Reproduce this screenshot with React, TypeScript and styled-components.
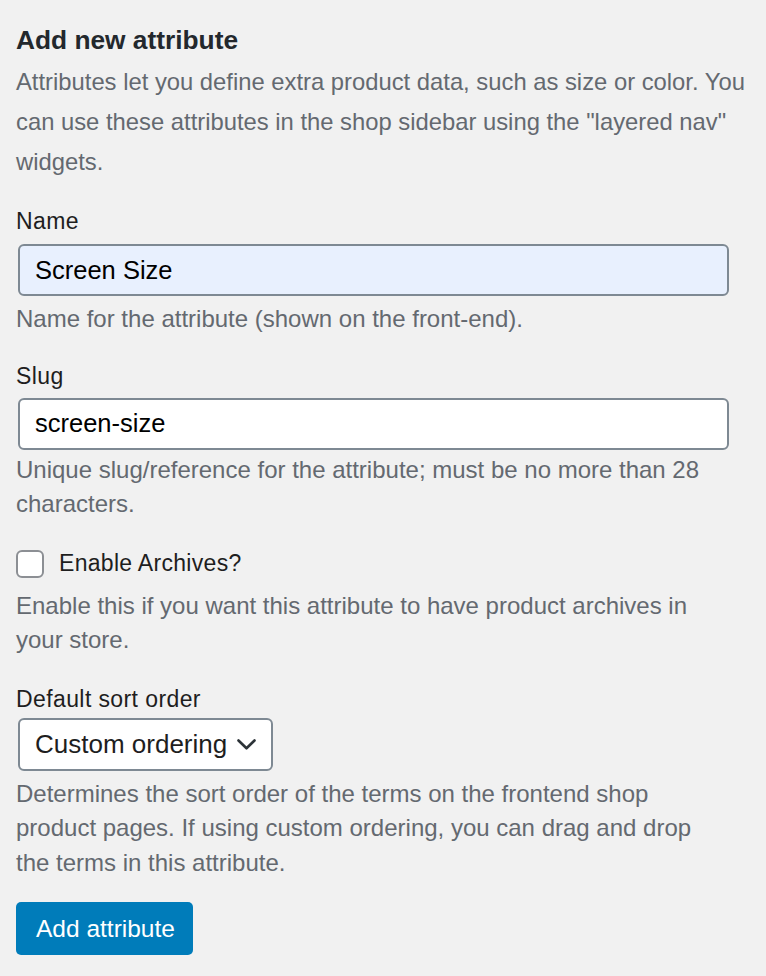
import React from 'react';
import styled, { createGlobalStyle } from 'styled-components';

const GlobalStyle = createGlobalStyle`
  html, body {
    margin: 0;
    padding: 0;
    background: #f1f1f1;
  }
  body {
    font-family: "Liberation Sans", Arial, sans-serif;
    color: #23282d;
  }
`;

const Form = styled.form`
  width: 766px;
  box-sizing: border-box;
  padding: 25px 35px 20px 16px;
  display: flex;
  flex-direction: column;
`;

const Title = styled.h2`
  margin: 0;
  font-size: 26.3px;
  line-height: 30px;
  font-weight: 700;
  color: #23282d;
`;

const Intro = styled.p`
  margin: 7px -30px 0 0;
  font-size: 23.8px;
  line-height: 40px;
  color: #646970;
`;

const Field = styled.div<{ $top: number }>`
  margin-top: ${(p) => p.$top}px;
  display: flex;
  flex-direction: column;
`;

const Label = styled.label<{ $gap: number }>`
  font-size: 23px;
  letter-spacing: 0.4px;
  line-height: 30px;
  color: #1e1e1e;
  margin-bottom: ${(p) => p.$gap}px;
`;

const TextInput = styled.input<{ $filled?: boolean }>`
  box-sizing: border-box;
  width: 711px;
  height: 52px;
  margin-left: 2px;
  padding: 0 15px;
  border: 2px solid #7e8993;
  border-radius: 6px;
  background: ${(p) => (p.$filled ? '#e8f0fe' : '#ffffff')};
  font-family: inherit;
  font-size: 25.5px;
  color: #000;
  outline: none;
`;

const Help = styled.p<{ $gap: number }>`
  margin: ${(p) => p.$gap}px 0 0;
  font-size: 24px;
  line-height: 34.5px;
  color: #646970;
`;

const CheckRow = styled.label`
  display: flex;
  align-items: center;
  gap: 15px;
  height: 30px;
  font-size: 23px;
  letter-spacing: 0.3px;
  color: #1e1e1e;
`;

const Box = styled.span`
  box-sizing: border-box;
  width: 28px;
  height: 28px;
  border: 2px solid #8c8f94;
  border-radius: 6px;
  background: #fff;
`;

const Select = styled.div`
  box-sizing: border-box;
  width: 255px;
  height: 53px;
  margin-left: 2px;
  padding: 0 15px 0 15px;
  border: 2px solid #7e8993;
  border-radius: 6px;
  background: #fff;
  display: flex;
  align-items: center;
  justify-content: space-between;
  font-size: 26px;
  color: #1e1e1e;
`;

const Button = styled.button`
  align-self: flex-start;
  margin-top: 22px;
  height: 53px;
  padding: 0 18px 0 20px;
  border: none;
  border-radius: 5px;
  background: #007cba;
  color: #fff;
  font-family: "Liberation Sans", Arial, sans-serif;
  font-size: 24.5px;
  cursor: pointer;
`;

const Chevron = () => (
  <svg width="19" height="11" viewBox="0 0 19 11" fill="none">
    <path d="M1.5 1.5 9.5 9.3l8-7.8" stroke="#2c3338" strokeWidth="2.6" strokeLinecap="round" strokeLinejoin="round" />
  </svg>
);

export default function App() {
  return (
    <>
      <GlobalStyle />
      <Form onSubmit={(e) => e.preventDefault()}>
        <Title>Add new attribute</Title>
        <Intro>
          Attributes let you define extra product data, such as size or color. You can use these attributes in the
          shop sidebar using the "layered nav" widgets.
        </Intro>

        <Field $top={24}>
          <Label $gap={8}>Name</Label>
          <TextInput $filled defaultValue="Screen Size" />
          <Help $gap={6}>Name for the attribute (shown on the front-end).</Help>
        </Field>

        <Field $top={24}>
          <Label $gap={7}>Slug</Label>
          <TextInput defaultValue="screen-size" />
          <Help $gap={3}>Unique slug/reference for the attribute; must be no more than 28 characters.</Help>
        </Field>

        <Field $top={27}>
          <CheckRow>
            <Box />
            Enable Archives?
          </CheckRow>
          <Help $gap={10}>Enable this if you want this attribute to have product archives in your store.</Help>
        </Field>

        <Field $top={26}>
          <Label $gap={4}>Default sort order</Label>
          <Select>
            <span>Custom ordering</span>
            <Chevron />
          </Select>
          <Help $gap={6}>
            Determines the sort order of the terms on the frontend shop product pages. If using custom ordering, you can
            drag and drop the terms in this attribute.
          </Help>
        </Field>

        <Button type="submit">Add attribute</Button>
      </Form>
    </>
  );
}
